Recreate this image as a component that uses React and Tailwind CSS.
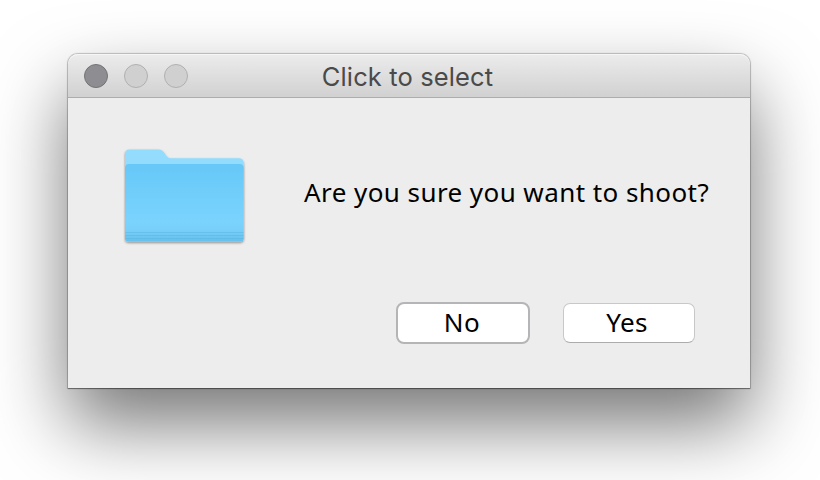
function Light({ active }) {
  return (
    <span
      className={
        active
          ? "h-6 w-6 rounded-full border border-[#737277] bg-[#8e8d92]"
          : "h-6 w-6 rounded-full border border-[#b0b0b0] bg-[#d0d0d0]"
      }
    />
  );
}

function FolderIcon() {
  return (
    <svg width="126" height="102" viewBox="0 0 126 102" className="block">
      <defs>
        <linearGradient id="front" x1="0" y1="0" x2="0" y2="1">
          <stop offset="0" stopColor="#66c8f8" />
          <stop offset="0.75" stopColor="#7ad3fd" />
          <stop offset="0.85" stopColor="#78d0fa" />
          <stop offset="1" stopColor="#65bfea" />
        </linearGradient>
        <filter id="drop" x="-10%" y="-10%" width="120%" height="120%">
          <feDropShadow dx="0" dy="1.2" stdDeviation="1.1" floodColor="#000" floodOpacity="0.4" />
        </filter>
      </defs>
      <g filter="url(#drop)">
        <path
          d="M3 92V8q0-4.500 4.500-4.500h29q3.500 0 5.500 3l2.500 3.500q1.500 2.200 4.500 2.200h67.500q5.200 0 5.200 5V92q0 3.500-3.500 3.500H6.500q-3.500 0-3.500-3.500z"
          fill="#93dcfe"
        />
        <path d="M3 92V22q0-4 4-4h110.700q4 0 4 4v70q0 3.500-3.500 3.500H6.500q-3.500 0-3.500-3.500z" fill="url(#front)" />
      </g>
      <path d="M3.500 86.500h118M3.500 89.500h118M3.500 92.500h118" stroke="#57b3df" strokeOpacity="0.5" />
    </svg>
  );
}

export default function App() {
  return (
    <div className="h-[480px] w-[820px] overflow-hidden bg-white pl-[68px] pt-[54px]">
      <div className="flex h-[334px] w-[682px] flex-col rounded-t-[10px] bg-[#ededed] shadow-[0_0_1px_1px_rgba(0,0,0,0.22),0_1px_1px_rgba(0,0,0,0.35),0_36px_76px_rgba(0,0,0,0.54)]">
        <header className="grid h-11 shrink-0 grid-cols-[1fr_auto_1fr] items-center rounded-t-[10px] border-b border-[#adadad] bg-linear-to-b from-[#ececec] to-[#d1d1d1] shadow-[inset_0_1px_0_#f6f6f6]">
          <div className="flex gap-4 pl-4">
            <Light active />
            <Light />
            <Light />
          </div>
          <h1 className="pr-[3px] pt-0.5 font-['Inter','Roboto',sans-serif] text-[25.500px] leading-8 tracking-[0.12px] text-[#4a4a4a]">
            Click to select
          </h1>
        </header>
        <main className="flex flex-1 flex-col font-['Noto_Sans',sans-serif] text-[26px] text-black">
          <div className="flex h-[205px] pl-[54px] pt-[48px]">
            <FolderIcon />
            <p className="ml-[56px] mt-[28px] whitespace-nowrap leading-9 tracking-[0.43px]">
              Are you sure you want to shoot?
            </p>
          </div>
          <div className="flex justify-end gap-[33px] pr-[55px]">
            <button className="-mt-px flex h-[42px] w-[134px] items-center justify-center rounded-[8px] border-2 border-[#b5b5b7] bg-white pb-0.5 pr-0.5 tracking-[0.4px]">
              No
            </button>
            <button className="flex h-10 w-[132px] items-center justify-center rounded-[7px] border border-[#c8c8c8] border-b-[#acacac] bg-white pb-0.5 pr-1 tracking-[0.4px]">
              Yes
            </button>
          </div>
        </main>
      </div>
    </div>
  );
}
